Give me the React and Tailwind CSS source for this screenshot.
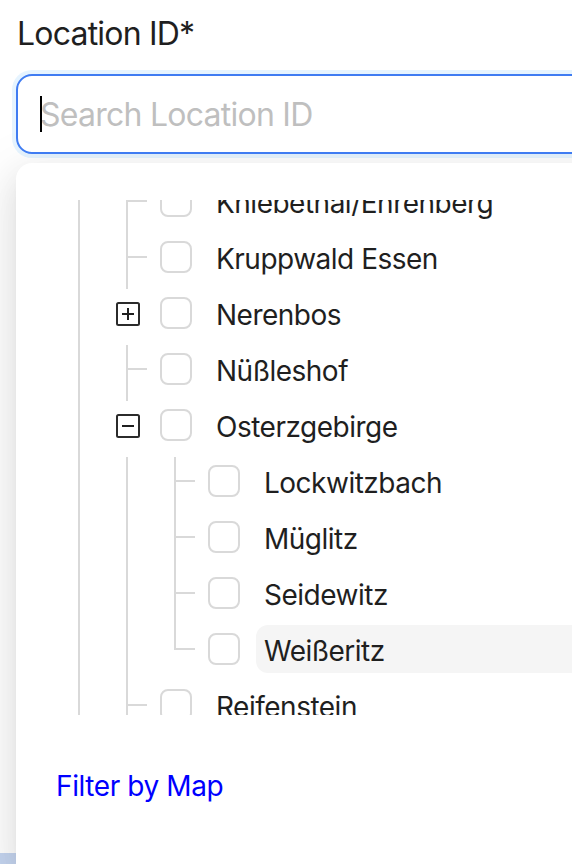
import React from "react";

const rows = [
  { label: "Kniebethal/Ehrenberg", level: 1, kind: "leaf" },
  { label: "Kruppwald Essen", level: 1, kind: "leaf" },
  { label: "Nerenbos", level: 1, kind: "closed" },
  { label: "Nüßleshof", level: 1, kind: "leaf" },
  { label: "Osterzgebirge", level: 1, kind: "open" },
  { label: "Lockwitzbach", level: 2, kind: "leaf" },
  { label: "Müglitz", level: 2, kind: "leaf" },
  { label: "Seidewitz", level: 2, kind: "leaf" },
  { label: "Weißeritz", level: 2, kind: "leaf", last: true, active: true },
  { label: "Reifenstein", level: 1, kind: "leaf" },
  { label: "Rodewisch", level: 1, kind: "leaf" },
];

// vertical guide for an ancestor level
const Indent = () => (
  <div className="flex h-14 w-12 shrink-0 justify-center">
    <div className="h-full w-[2px] bg-[#d9d9d9]" />
  </div>
);

const Switcher = ({ kind, last }) => {
  if (kind === "leaf") {
    return (
      <svg width="48" height="56" className="shrink-0">
        <line x1="24" y1="0" x2="24" y2={last ? 25 : 56} stroke="#d9d9d9" strokeWidth="2" />
        <line x1="24" y1="24" x2="44" y2="24" stroke="#d9d9d9" strokeWidth="2" />
      </svg>
    );
  }
  return (
    <svg width="48" height="56" className="shrink-0">
      <rect x="14" y="14" width="22" height="22" rx="1.5" fill="white" stroke="#2b2b2b" strokeWidth="2" />
      <line x1="19" y1="25" x2="31" y2="25" stroke="#1f1f1f" strokeWidth="2" />
      {kind === "closed" ? (
        <line x1="25" y1="19" x2="25" y2="31" stroke="#1f1f1f" strokeWidth="2" />
      ) : null}
    </svg>
  );
};

const TreeRow = ({ row }) => {
  let indents = [];
  for (let i = 0; i < row.level; i++) indents.push(<Indent key={i} />);

  return (
    <div className="flex h-14 items-start">
      {indents}
      <Switcher kind={row.kind} last={row.last} />
      <div className="ml-[9px] mt-2 h-8 w-8 shrink-0 rounded-[8px] border-2 border-[#d9d9d9] bg-white" />
      <div
        className={
          "ml-4 h-12 flex-1 whitespace-nowrap rounded-xl px-2 pt-[2px] text-[28px] leading-[48px] tracking-[-0.5px] text-[#1f1f1f] " +
          (row.active ? "bg-[#f5f5f5]" : "")
        }
      >
        {row.label}
      </div>
    </div>
  );
};

export default function App() {
  return (
    <div
      className="flex h-[864px] w-[572px] flex-col overflow-hidden bg-white"
      style={{ fontFamily: "Inter, 'Noto Sans', sans-serif" }}
    >
      <div className="pl-[17px] pt-3 text-[32px] leading-[44px] tracking-[-0.8px] text-[#1f1f1f]">Location ID*</div>

      <div className="relative ml-4 mr-[-40px] mt-[18px]">
        <input
          readOnly
          placeholder="Search Location ID"
          className="h-20 w-full rounded-2xl border-2 border-[#3f7cf2] bg-white pl-[22px] text-[32px] tracking-[-0.75px] text-[#1f1f1f] shadow-[0_0_0_4px_rgba(5,145,255,0.1)] outline-none placeholder:text-[#bfbfbf]"
        />
        <div className="absolute left-6 top-[22px] h-9 w-[2px] bg-black" />
      </div>

      <div className="mt-[9px] flex flex-1">
        <div className="flex w-4 shrink-0 flex-col">
          <div className="flex-1" />
          <div className="h-[11px] bg-[#c5d5f0]" />
        </div>
        <div className="mr-[-40px] flex flex-1 flex-col rounded-tl-2xl bg-white pt-[37px] shadow-[0_12px_32px_rgba(0,0,0,0.09),0_6px_12px_-8px_rgba(0,0,0,0.12),0_18px_56px_16px_rgba(0,0,0,0.06)]">
          <div className="h-[515px] overflow-hidden pl-[39px]">
            <div className="mt-[-23px]">
              {rows.map((row, index) => (
                <TreeRow key={index} row={row} />
              ))}
            </div>
          </div>
          <div className="mt-[49px] pl-[40px] text-[28px] leading-[44px] tracking-[-0.4px] text-[#0000ff]">Filter by Map</div>
        </div>
      </div>
    </div>
  );
}
